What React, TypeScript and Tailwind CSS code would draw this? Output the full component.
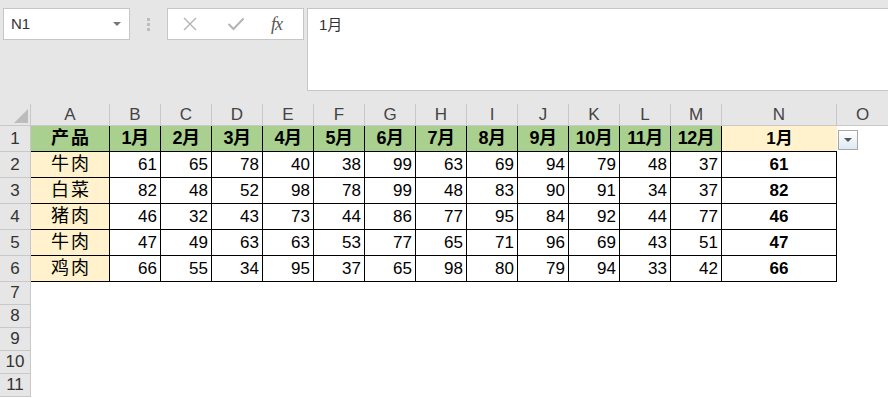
import React from 'react';

const months = ['1月', '2月', '3月', '4月', '5月', '6月', '7月', '8月', '9月', '10月', '11月', '12月'];
const letters = ['A', 'B', 'C', 'D', 'E', 'F', 'G', 'H', 'I', 'J', 'K', 'L', 'M', 'N', 'O'];

const rows: { name: string; values: number[] }[] = [
  { name: '牛肉', values: [61, 65, 78, 40, 38, 99, 63, 69, 94, 79, 48, 37] },
  { name: '白菜', values: [82, 48, 52, 98, 78, 99, 48, 83, 90, 91, 34, 37] },
  { name: '猪肉', values: [46, 32, 43, 73, 44, 86, 77, 95, 84, 92, 44, 77] },
  { name: '牛肉', values: [47, 49, 63, 63, 53, 77, 65, 71, 96, 69, 43, 51] },
  { name: '鸡肉', values: [66, 55, 34, 95, 37, 65, 98, 80, 79, 94, 33, 42] },
];

const cjk = "font-['Liberation_Sans','Noto_Sans_CJK_SC',sans-serif]";

function RowHead({ n }: { n: number }) {
  return (
    <div className="flex items-center justify-center bg-[#e6e6e6] border-r border-b border-[#c8c8c8] text-[17px] text-[#333]">
      {n}
    </div>
  );
}

export default function App() {
  return (
    <div className={`w-[888px] h-[398px] overflow-hidden bg-white ${cjk}`}>
      {/* formula bar */}
      <div className="h-[104px] bg-[#e6e6e6] flex items-start pt-[8px]">
        <div className="ml-[3px] w-[127px] h-[32px] bg-white border border-[#c6c6c6] flex items-center pl-[7px] pr-[8px]">
          <span className="text-[15px] text-[#333]">N1</span>
          <div className="ml-auto w-0 h-0 border-l-[4px] border-r-[4px] border-t-[4px] border-l-transparent border-r-transparent border-t-[#777]" />
        </div>
        <div className="w-[37px] h-[32px] flex flex-col items-center justify-center gap-[2px]">
          <div className="w-[3px] h-[3px] bg-[#bdbdbd]" />
          <div className="w-[3px] h-[3px] bg-[#bdbdbd]" />
          <div className="w-[3px] h-[3px] bg-[#bdbdbd]" />
        </div>
        <div className="w-[137px] h-[32px] bg-white border border-[#c6c6c6] flex items-center">
          <svg className="ml-[14px]" width="16" height="16" viewBox="0 0 16 16">
            <path d="M2 2 L14 14 M14 2 L2 14" stroke="#b4b4b4" strokeWidth="1.4" fill="none" />
          </svg>
          <svg className="ml-[29px]" width="18" height="16" viewBox="0 0 18 16">
            <path d="M1.5 8 L6.5 13 L16.5 2.5" stroke="#b4b4b4" strokeWidth="2" fill="none" />
          </svg>
          <span className="ml-[26px] font-['Liberation_Serif',serif] italic text-[18px] text-[#555] tracking-[-1px]">fx</span>
        </div>
        <div className="ml-[3px] flex-1 h-[83px] bg-white border border-r-0 border-[#c6c6c6] pl-[11px] pt-[5px] text-[15px] text-[#333]">
          1月
        </div>
      </div>

      {/* sheet */}
      <div className="grid grid-cols-[31px_79px_repeat(12,51px)_115px_1fr] grid-rows-[22px_repeat(6,26px)_repeat(5,23px)]">
        <div className="relative bg-[#e6e6e6] border-r border-b border-[#c8c8c8]">
          <svg className="absolute right-[2px] bottom-[2px]" width="14" height="14" viewBox="0 0 14 14">
            <path d="M14 0 L14 14 L0 14 Z" fill="#bcbcbc" />
          </svg>
        </div>
        {letters.map((l, i) => (
          <div
            key={l}
            className={`flex items-center justify-center bg-[#e6e6e6] border-b border-[#c8c8c8] text-[17px] text-[#444] ${i < 14 ? 'border-r' : ''}`}
          >
            {l}
          </div>
        ))}

        {/* header row */}
        <RowHead n={1} />
        <div className="flex items-center justify-center bg-[#a9d08e] border-r border-b border-black text-[18px] font-bold tracking-[2px] pl-[2px]">
          产品
        </div>
        {months.map((m) => (
          <div key={m} className="flex items-center justify-center bg-[#a9d08e] border-r border-b border-black text-[18px] font-bold tracking-[-0.5px]">
            {m}
          </div>
        ))}
        <div className="flex items-center justify-center bg-[#fff2cc] border-b border-black text-[17px] font-bold">
          1月
        </div>
        <div className="relative">
          <div className="absolute left-[1px] top-[4px] w-[20px] h-[20px] border border-[#a8a8a8] bg-gradient-to-b from-white to-[#dde9f2] flex items-center justify-center">
            <div className="w-0 h-0 border-l-[4px] border-r-[4px] border-t-[4px] border-l-transparent border-r-transparent border-t-[#555]" />
          </div>
        </div>

        {/* data rows */}
        {rows.map((r, ri) => (
          <React.Fragment key={ri}>
            <RowHead n={ri + 2} />
            <div className="flex items-center justify-center bg-[#fff2cc] border-r border-b border-black text-[18px] tracking-[2px] pl-[2px]">
              {r.name}
            </div>
            {r.values.map((v, vi) => (
              <div key={vi} className="flex items-center justify-end pr-[3px] border-r border-b border-black text-[17px]">
                {v}
              </div>
            ))}
            <div className="flex items-center justify-center border-r border-b border-black text-[17px] font-bold">
              {r.values[0]}
            </div>
            <div />
          </React.Fragment>
        ))}

        {/* empty rows */}
        {[7, 8, 9, 10, 11].map((n) => (
          <React.Fragment key={n}>
            <RowHead n={n} />
            <div className="col-span-15" />
          </React.Fragment>
        ))}
      </div>
    </div>
  );
}
